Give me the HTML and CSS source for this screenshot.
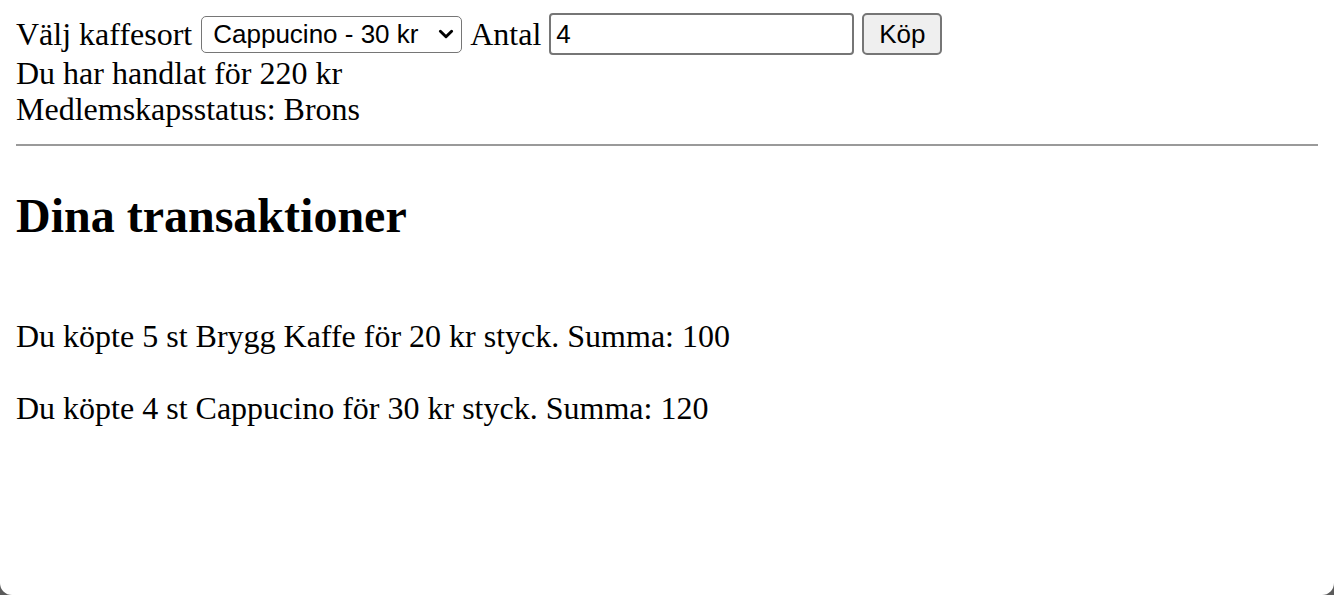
FILE: index.html
```html
<!DOCTYPE html>
<html lang="sv">
<head>
<meta charset="utf-8">
<title>Kaffe</title>
<link rel="stylesheet" href="styles.css">
</head>
<body>
<div class="page">
  <div class="order-row">
    <span class="label">Välj kaffesort</span>
    <span class="select-box"><span class="select-text">Cappucino - 30 kr</span><svg class="chev" viewBox="0 0 16 16" width="16" height="16"><path d="M3 5.5 L8 10.5 L13 5.5" fill="none" stroke="#000" stroke-width="2.6" stroke-linecap="round" stroke-linejoin="round"/></svg></span>
    <span class="label">Antal</span>
    <span class="text-input">4</span>
    <span class="btn">Köp</span>
  </div>
  <div class="line">Du har handlat för 220 kr</div>
  <div class="line">Medlemskapsstatus: Brons</div>
  <div class="rule"></div>
  <h2 class="title">Dina transaktioner</h2>
  <div class="transactions">
    <p class="tx">Du köpte 5 st Brygg Kaffe för 20 kr styck. Summa: 100</p>
    <p class="tx">Du köpte 4 st Cappucino för 30 kr styck. Summa: 120</p>
  </div>
</div>
</body>
</html>
```
FILE: styles.css
```css
html {
  margin: 0;
  background: #5b5b5b;
  height: 595px;
  overflow: hidden;
}
body {
  margin: 0;
  background: #fff;
  font-family: "Liberation Serif", "Times New Roman", serif;
  font-size: 32px;
  color: #000;
  height: 595px;
  overflow: hidden;
  border-radius: 0 0 12px 12px;
}
.page {
  padding: 13px 16px 0 16px;
}
.order-row {
  display: flex;
  align-items: center;
  height: 42px;
  gap: 8px;
}
.label {
  line-height: 36px;
}
.select-box {
  display: flex;
  align-items: center;
  justify-content: space-between;
  box-sizing: border-box;
  width: 261px;
  height: 37px;
  border: 1.5px solid #767676;
  border-radius: 5px;
  padding: 0 6px 0 11px;
  margin-left: 1px;
  font-family: "Liberation Sans", Arial, sans-serif;
  font-size: 26px;
}
.chev { width: 18px; height: 18px; }
.text-input {
  box-sizing: border-box;
  width: 305px;
  height: 42px;
  border: 2px solid #767676;
  border-radius: 4px;
  padding: 0 5px;
  display: flex;
  align-items: center;
  font-family: "Liberation Sans", Arial, sans-serif;
  font-size: 26px;
}
.btn {
  box-sizing: border-box;
  width: 80px;
  height: 42px;
  border: 2px solid #767676;
  border-radius: 5px;
  background: #efefef;
  display: flex;
  align-items: center;
  justify-content: center;
  font-family: "Liberation Sans", Arial, sans-serif;
  font-size: 26px;
}
.line {
  line-height: 36px;
}
.rule {
  height: 2px;
  background: #9a9a9a;
  margin-top: 17px;
}
.title {
  font-size: 48px;
  font-weight: bold;
  margin: 42px 0 0 0;
  line-height: 56px;
}
.transactions {
  padding-top: 74px;
}
.tx {
  margin: 0 0 36px 0;
  line-height: 36px;
}
```
